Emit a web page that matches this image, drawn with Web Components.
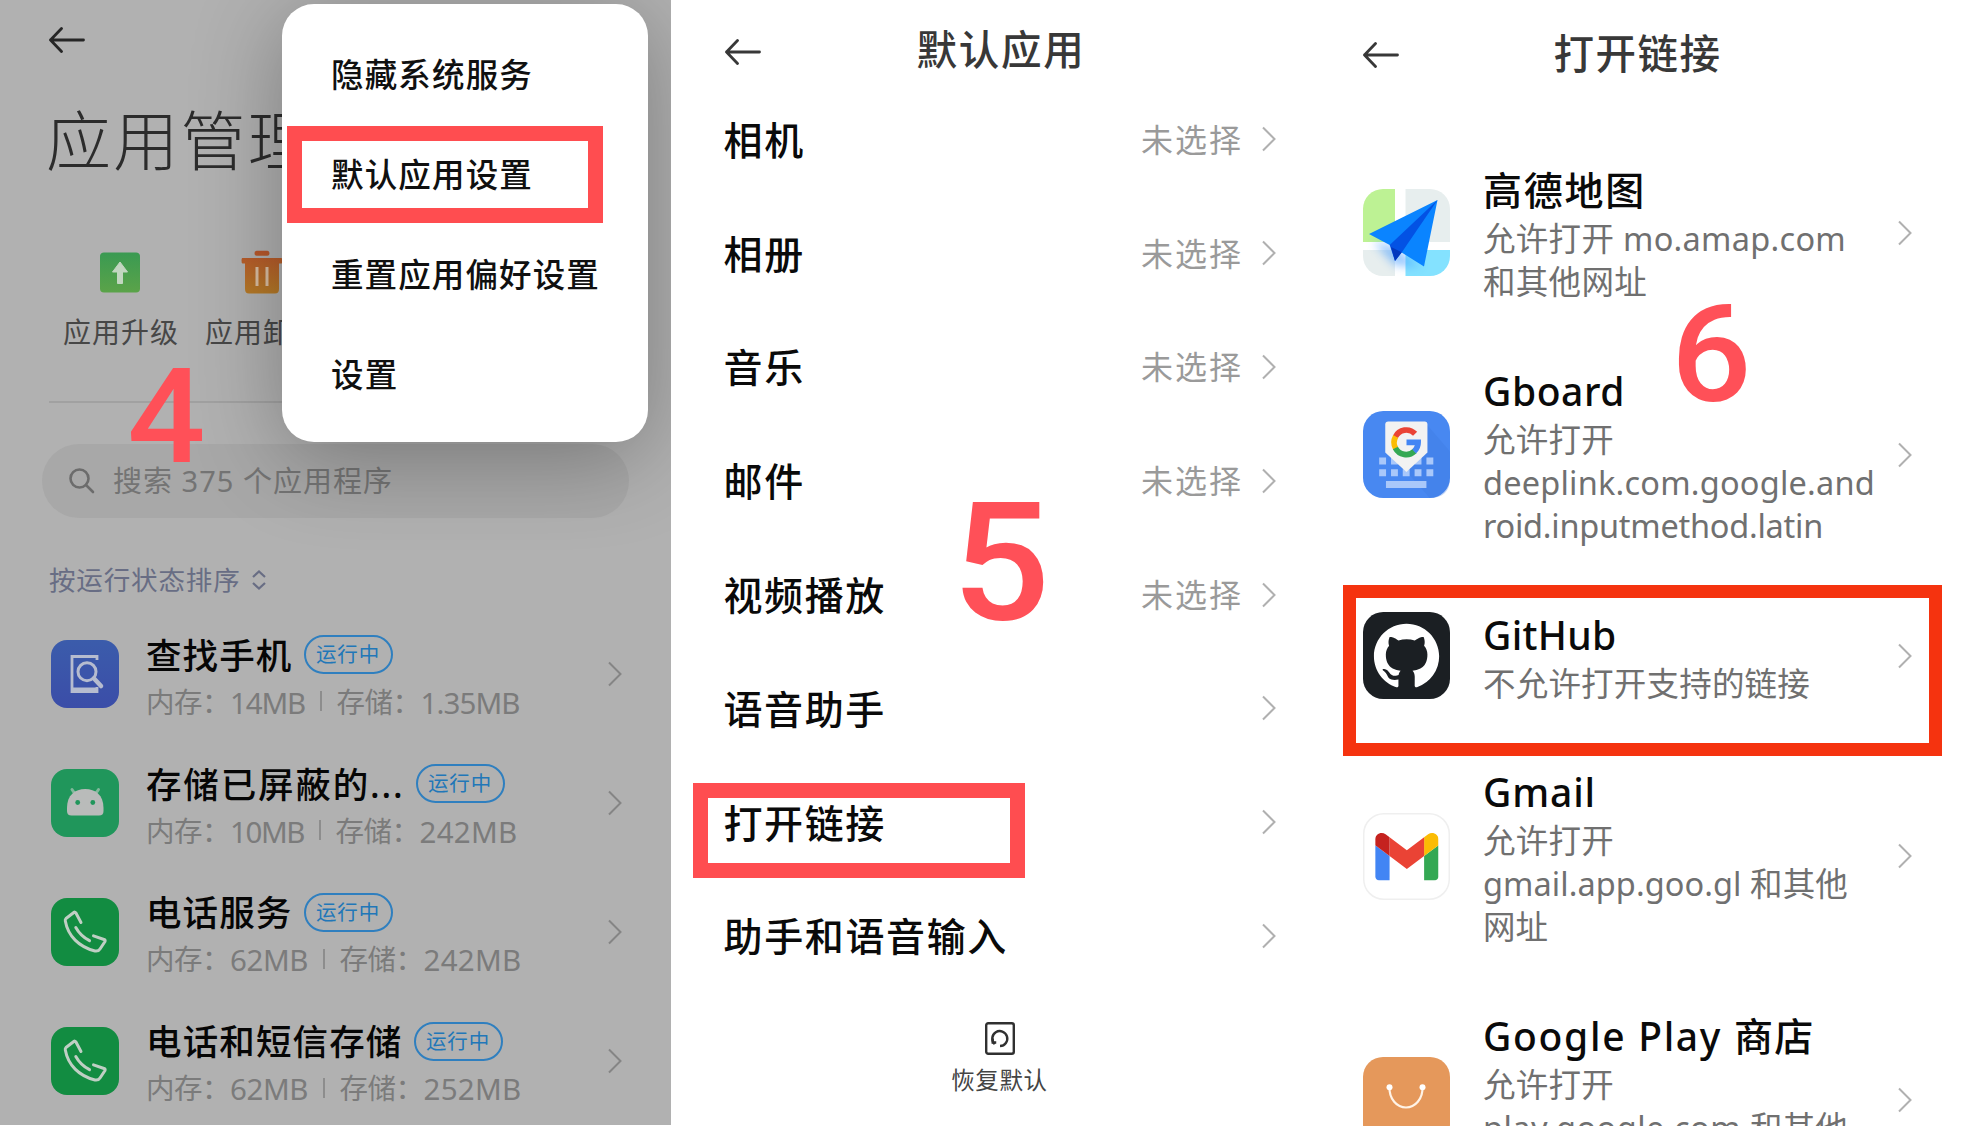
<!DOCTYPE html>
<html lang="zh-CN">
<head>
<meta charset="utf-8">
<title>默认应用设置</title>
<style>
body{margin:0;width:1967px;height:1126px;overflow:hidden;background:#fff;font-family:"Noto Sans","Noto Sans CJK SC",sans-serif;}
tutorial-page{height:1126px}
</style>
</head>
<body>
<tutorial-page></tutorial-page>
<script>
const define=(name,html,setup)=>{
  const tpl=document.createElement('template');
  tpl.innerHTML=html;
  customElements.define(name,class extends HTMLElement{
    constructor(){super();this.attachShadow({mode:'open'});}
    connectedCallback(){
      if(this.ready)return;this.ready=true;
      this.shadowRoot.append(tpl.content.cloneNode(true));
      if(setup)setup(this,this.shadowRoot);
    }
  });
};

/* Text run spread over a given advance width through letter-spacing. */
define('fit-text','<style>:host{display:inline-block;white-space:pre;flex:none}span{display:inline-block}</style><span><slot></slot></span>',(el,root)=>{
  const w=+el.getAttribute('w'),s=root.querySelector('span');
  const n=[...el.textContent].length;
  s.style.letterSpacing=((w-s.getBoundingClientRect().width)/n)+'px';
  el.style.width=w+'px';
});

define('back-arrow','<style>:host{display:block;flex:none}svg{display:block}</style><svg width="36" height="26" viewBox="0 0 36 26" fill="none" stroke="currentColor" stroke-width="2.8" stroke-linecap="round" stroke-linejoin="round"><path d="M34.5 13H1.5M12.5 1.5L1.5 13l11 11.5"/></svg>');
define('chevron-right','<style>:host{display:block;flex:none;color:#b0b0b0}svg{display:block}</style><svg width="14" height="26" viewBox="0 0 14 26" fill="none" stroke="currentColor" stroke-width="2"><path d="M1 1.5L12.5 13 1 24.5"/></svg>');

define('app-icon','<style>:host{display:block;flex:none}svg{display:block}</style>',(el,root)=>{
  const phone='<svg width="68" height="68" viewBox="0 0 68 68"><rect width="68" height="68" rx="16" fill="#128c41"/><g fill="none" stroke="#bfcfc4" stroke-width="3" stroke-linecap="round" stroke-linejoin="round"><path d="M30 24.5L24.8 14.8Q24 13.600 22.800 14.500L15 20.500Q14 21.500 14.300 23C17 38 28 49 44 53Q47.500 53.500 49 51L54 43.500Q54.500 42 53 41.500L42.500 37.800"/><path d="M24.800 29.500Q29.500 38 38.500 42.700"/></g></svg>';
  const icons={
    find:'<svg width="68" height="68" viewBox="0 0 68 68"><defs><linearGradient id="a" x1="0" y1="0" x2="0" y2="1"><stop stop-color="#3b5cab"/><stop offset="1" stop-color="#3b4da8"/></linearGradient></defs><rect width="68" height="68" rx="16" fill="url(#a)"/><path d="M46 20V16.500H21V51.500H46V47" fill="none" stroke="#b6bccf" stroke-width="2.800"/><path d="M21 47.500h25.500v5H21z" fill="#b6bccf"/><circle cx="36" cy="31.700" r="9" fill="#3b55aa" stroke="#b6bccf" stroke-width="3"/><path d="M43 38.500L50 46" stroke="#b6bccf" stroke-width="4.500" stroke-linecap="round"/></svg>',
    android:'<svg width="68" height="68" viewBox="0 0 68 68"><rect width="68" height="68" rx="16" fill="#20965b"/><path d="M21 20.500l4 6M47.500 20.500l-4 6" stroke="#82b89c" stroke-width="3" stroke-linecap="round"/><path d="M16 39C16 26 24 20 34.200 20S52.500 26 52.500 39v3q0 4.500-4.500 4.500H20.500Q16 46.500 16 42z" fill="#b9bbba"/><circle cx="26.700" cy="33.500" r="2.400" fill="#20965b"/><circle cx="41.800" cy="33.500" r="2.400" fill="#20965b"/></svg>',
    phone,
    amap:'<svg width="87" height="87" viewBox="0 0 87 87"><defs><clipPath id="c"><rect width="87" height="87" rx="20"/></clipPath><filter id="f" x="-50%" y="-50%" width="200%" height="200%"><feGaussianBlur stdDeviation="5"/></filter></defs><g clip-path="url(#c)"><path d="M0 0h87v87H0z" fill="#fff"/><path d="M0 0h32v53H0z" fill="#bdf294"/><path d="M42.500 0H87v53H42.500zM0 61h32v26H0z" fill="#e7eeee"/><path d="M42.500 61H87v26H42.500z" fill="#84e2ff"/><path d="M10 52l20 6 28 20-26-2z" fill="#459dff" opacity=".6" filter="url(#f)"/></g><path d="M74.500 11L6 45l20.700 11 12 7.500L61 77.500z" fill="#0a84ff"/><path d="M74.500 11L26.700 56 32 72l7-9z" fill="#0352e4"/><path d="M28 58l4 14 6.700-8.700z" fill="#0337bd"/></svg>',
    gboard:'<svg width="87" height="87" viewBox="0 0 86 86"><rect width="86" height="86" rx="20" fill="#4888f1"/><path d="M63.700 14L86 40V66q0 20-20 20L43 60z" fill="#3c78dd" opacity=".3"/><g fill="#a9c8fa"><path d="M16 46h6.800v6.800H16zM27.700 46h6.800v6.800h-6.800zM51 46h6.800v6.800H51zM62.700 46h6.800v6.800h-6.800zM16 57.700h6.800v6.800H16zM27.700 57.700h6.800v6.800h-6.800zM39.300 57.700h6.800v6.800h-6.800zM51 57.700h6.800v6.800H51zM62.700 57.700h6.800v6.800h-6.800zM22.700 69.300h40V76h-40z"/></g><path d="M25 10.300H61q2.700 0 2.700 3V41L42.900 60.300 22 41V13.300q0-3 3-3z" fill="#f2f2f2"/><g fill="none" stroke-width="5.600"><path d="M51.500 22.500A12 12 0 0 0 32 25.600" stroke="#ea4335"/><path d="M32.300 25.200a12 12 0 0 0 0 11.800" stroke="#fbbc05"/><path d="M32 36.500a12 12 0 0 0 19 3.200" stroke="#34a853"/><path d="M43 31h11.500a12 12 0 0 1-4 9" stroke="#4285f4"/></g></svg>',
    github:'<svg width="87" height="87" viewBox="0 0 86 86"><rect width="86" height="86" rx="20" fill="#1b1f23"/><path transform="translate(10.800 11.500) scale(4.030)" fill="#fff" d="M8 0C3.580 0 0 3.580 0 8c0 3.540 2.290 6.530 5.470 7.590.4.070.55-.17.55-.38 0-.19-.01-.82-.01-1.490-2.010.37-2.530-.49-2.690-.94-.09-.23-.48-.94-.82-1.130-.28-.15-.68-.52-.01-.53.63-.01 1.080.58 1.230.82.72 1.210 1.870.87 2.330.66.07-.52.28-.87.51-1.070-1.780-.2-3.640-.89-3.640-3.950 0-.87.31-1.590.82-2.150-.08-.2-.36-1.020.08-2.120 0 0 .67-.21 2.200.82.64-.18 1.320-.27 2-.27s1.360.09 2 .27c1.530-1.040 2.200-.82 2.200-.82.44 1.100.16 1.920.08 2.120.51.56.82 1.270.82 2.150 0 3.070-1.870 3.750-3.650 3.950.29.25.54.73.54 1.480 0 1.070-.01 1.930-.01 2.200 0 .21.15.46.55.38A8.013 8.013 0 0 0 16 8c0-4.420-3.580-8-8-8z"/></svg>',
    gmail:'<svg width="87" height="87" viewBox="0 0 87 87"><rect x=".75" y=".75" width="85.500" height="85.500" rx="20" fill="#fff" stroke="#efefef" stroke-width="1.500"/><svg x="12.200" y="20" width="63.300" height="47.500" viewBox="52 42 88 66"><path fill="#4285f4" d="M58 108h14V74L52 59v43c0 3.320 2.690 6 6 6"/><path fill="#34a853" d="M120 108h14c3.320 0 6-2.690 6-6V59l-20 15"/><path fill="#fbbc04" d="M120 48v26l20-15v-8c0-7.420-8.470-11.650-14.400-7.200"/><path fill="#ea4335" d="M72 74V48l24 18 24-18v26L96 92"/><path fill="#c5221f" d="M52 51v8l20 15V48l-5.600-4.200c-5.940-4.450-14.400-.22-14.400 7.200"/></svg></svg>',
    play:'<svg width="87" height="87" viewBox="0 0 87 87"><rect width="87" height="87" rx="20" fill="#e5985b"/><path d="M26.500 30C26 42 34 50.500 43 50.500S60 42 59.500 30" fill="none" stroke="#fff3e6" stroke-width="2.200"/><circle cx="26.500" cy="30.300" r="3" fill="#fff"/><circle cx="59.500" cy="30.300" r="3" fill="#fff"/></svg>'
  };
  root.innerHTML+=icons[el.getAttribute('name')];
});

define('status-badge','<style>:host{display:flex;box-sizing:border-box;width:89px;height:39px;border:2px solid #2f7fbf;border-radius:20px;align-items:center;justify-content:center;color:#2177b8;font-size:20.500px;line-height:35px;flex:none}</style><fit-text w="64">运行中</fit-text>');

const appRow=r=>`<app-line><app-icon slot="icon" name="${r.i}"></app-icon><fit-text slot="name" w="${r.nw}">${r.n}</fit-text><fit-text slot="mem" w="${r.mw}">${r.m}</fit-text><fit-text slot="store" w="${r.sw}">${r.s}</fit-text></app-line>`;
define('app-line',`<style>
:host{display:flex;align-items:center;height:128.800px;padding:0 49px 0 51px}
.t{flex:1;padding:8px 0 0 27px}
.a{display:flex;align-items:center;height:48px;font-size:35.500px;line-height:46px;font-weight:500;color:#060606}
status-badge{font-weight:400;margin-left:11px}
.b{display:flex;align-items:center;height:47px;font-size:28.500px;line-height:47px;color:#7b7b7b;font-weight:400}
.b ::slotted(fit-text){font-size:29.500px}
i{width:1.500px;height:20px;background:#8d8d8d;margin:0 15px 2px 15px}
chevron-right{color:#858585}
</style><slot name="icon"></slot><div class="t"><div class="a"><slot name="name"></slot><status-badge></status-badge></div><div class="b"><fit-text w="84">内存：</fit-text><slot name="mem"></slot><i></i><fit-text w="84">存储：</fit-text><slot name="store"></slot></div></div><chevron-right></chevron-right>`);

define('popup-menu',`<style>
:host{display:flex;flex-direction:column;box-sizing:border-box;position:absolute;left:282px;top:4px;width:366px;height:438px;border-radius:32px;background:#fff;padding:20.500px 0 0 49px;box-shadow:0 14px 90px rgba(0,0,0,.3);font-size:32.500px;font-weight:500;color:#101010}
div{height:100.300px;line-height:99.300px}
</style><div><fit-text w="202">隐藏系统服务</fit-text></div><div><fit-text w="202">默认应用设置</fit-text></div><div><fit-text w="269">重置应用偏好设置</fit-text></div><div><fit-text w="67.500">设置</fit-text></div>`);

define('app-manager',`<style>
:host{display:block;box-sizing:border-box;width:671px;height:1125px;background:#b1b1b1;overflow:hidden;position:relative;flex:none;color:#2c2c2c}
header{height:80px;display:flex;align-items:center;padding-left:49px;color:#262626}
h1{margin:0;height:120px;line-height:120px;padding-left:46px;font-size:65px;font-weight:300}
.acts{display:flex;box-sizing:border-box;height:203px;margin:0 49px;padding-top:50px;border-bottom:2px solid #a1a1a1}
.act{width:142px;flex:none;display:flex;flex-direction:column;align-items:center;gap:18px;font-size:28px;line-height:40px;color:#474747;font-weight:400}
.act svg{display:block}
.act fit-text{margin-left:2px}
.search{display:flex;align-items:center;height:74px;box-sizing:border-box;border-radius:37px;margin:41px 42px 0 42px;padding:0 27px;background:#a8a8a8;color:#747474;font-size:29px;line-height:74px;gap:18px}
.sort{display:flex;align-items:center;height:40px;margin:42px 0 0 49px;color:#686d84;font-size:26.500px;gap:11px;line-height:40px}
.list{margin-top:10px}
</style>
<header><back-arrow></back-arrow></header>
<h1><fit-text w="269">应用管理</fit-text></h1>
<div class="acts">
<div class="act"><svg width="40" height="44" viewBox="0 0 40 44"><defs><linearGradient id="g" x1="0" y1="0" x2="0" y2="1"><stop stop-color="#3a9a52"/><stop offset="1" stop-color="#5ba349"/></linearGradient></defs><rect y="2.500" width="40" height="40" rx="4" fill="url(#g)"/><path d="M20 12l7.500 10h-5v11.500h-5V22h-5z" fill="#c2d6c0" stroke="#c2d6c0" stroke-linejoin="round"/></svg><fit-text w="116">应用升级</fit-text></div>
<div class="act"><svg width="42" height="44" viewBox="0 0 42 44"><defs><linearGradient id="o" x1="0" y1="0" x2="0" y2="1"><stop stop-color="#b8562b"/><stop offset="1" stop-color="#b67b28"/></linearGradient></defs><path d="M15.500.800h11q2 0 2 2.500t-2 2.500h-11q-2 0-2-2.500t2-2.500zM1.500 8H40.500q1 0 1 2.500t-1 3H38V39q0 4.500-4 4.500H8Q4 43.500 4 39V13.500H1.500q-1 0-1-3T1.500 8z" fill="url(#o)"/><path d="M14.500 17h3v19h-3zM24.500 17h3v19h-3z" fill="#d9bea2"/></svg><fit-text w="116">应用卸载</fit-text></div>
</div>
<div class="search"><svg width="26" height="26" viewBox="0 0 26 26" fill="none" stroke="#6c6c6c" stroke-width="2.600" stroke-linecap="round"><circle cx="10.500" cy="10.500" r="9"/><path d="M17 17l7 7"/></svg><fit-text w="280">搜索 375 个应用程序</fit-text></div>
<div class="sort"><fit-text w="191.500">按运行状态排序</fit-text><svg width="14" height="20" viewBox="0 0 14 20" fill="none" stroke="currentColor" stroke-width="2.200"><path d="M1 7l6-5.500L13 7M1 13l6 5.500L13 13"/></svg></div>
<div class="list">${[
{i:'find',n:'查找手机',nw:146.5,m:'14MB',mw:75,s:'1.35MB',sw:99},
{i:'android',n:'存储已屏蔽的...',nw:258.5,m:'10MB',mw:74,s:'242MB',sw:98},
{i:'phone',n:'电话服务',nw:146.5,m:'62MB',mw:78,s:'242MB',sw:98},
{i:'phone',n:'电话和短信存储',nw:256.5,m:'62MB',mw:78,s:'252MB',sw:98}].map(appRow).join('')}</div>
<popup-menu></popup-menu>`);

const defRow=(t,w,v)=>`<setting-row><fit-text w="${w}">${t}</fit-text>${v?'<fit-text slot="value" w="102">未选择</fit-text>':''}</setting-row>`;
define('setting-row',`<style>
:host{display:flex;align-items:center;height:113.800px;padding:0 55px 0 52.500px;font-size:39px;font-weight:500;color:#0a0a0a}
.l{flex:1;margin-bottom:5px}
.v{font-size:32px;font-weight:400;color:#9a9a9a;margin:0 19px 5px 0}
chevron-right{margin-bottom:2px}
</style><div class="l"><slot></slot></div><div class="v"><slot name="value"></slot></div><chevron-right></chevron-right>`);

define('default-apps',`<style>
:host{display:block;width:660px;height:1126px;flex:none;color:#383838}
header{display:grid;grid-template-columns:140px 1fr 140px;height:84px;align-items:center;margin-bottom:-.500px}
header back-arrow{margin:19px 0 0 54px}
h2{margin:15px 0 0;font-weight:450;font-size:40.500px;text-align:center;line-height:60px}
.foot{display:flex;flex-direction:column;align-items:center;margin:28px 3px 0 0;gap:8px;font-size:23.500px;line-height:34px;color:#444}
.foot svg{display:block}
</style>
<header><back-arrow></back-arrow><h2><fit-text w="169">默认应用</fit-text></h2></header>
${defRow('相机',81.5,1)}${defRow('相册',81.5,1)}${defRow('音乐',81.5,1)}${defRow('邮件',81.5,1)}${defRow('视频播放',162.5,1)}${defRow('语音助手',162.5)}${defRow('打开链接',162.5)}${defRow('助手和语音输入',284.5)}
<div class="foot"><svg width="30" height="33" viewBox="0 0 30 33" fill="none" stroke="#303030" stroke-width="2.400"><rect x="1.200" y="1.200" width="27.600" height="30.600" rx="2"/><path d="M10.500 22.800A7.500 7.500 0 1 1 16 24" transform="rotate(8 15 17)"/><path d="M8 16.500l-.500 4 3.500.500" transform="rotate(-8 8 19)"/></svg><fit-text w="96.500">恢复默认</fit-text></div>`);

define('link-item',`<style>
:host{display:flex;align-items:center;margin-bottom:60.800px}
.t{flex:1;padding-left:33px;font-size:32.500px;line-height:43px;color:#707070}
.h{height:54px;line-height:53px;font-size:39px;font-weight:500;color:#0a0a0a;white-space:nowrap}
chevron-right{margin-bottom:1px}
::slotted(app-icon){margin-bottom:1px}
</style><slot name="icon"></slot><div class="t"><div class="h"><slot name="title"></slot></div><slot></slot></div><chevron-right></chevron-right>`);
define('text-line','<style>:host{display:flex;height:43px;gap:0;white-space:pre}</style><slot></slot>');
define('title-line','<style>:host{display:flex}</style><slot></slot>');

const F=(w,t)=>`<fit-text w="${w}">${t}</fit-text>`;
const link=(icon,title,lines)=>`<link-item><app-icon slot="icon" name="${icon}"></app-icon><title-line slot="title">${title}</title-line>${lines.map(l=>`<text-line>${l}</text-line>`).join('')}</link-item>`;
define('open-links',`<style>
:host{display:block;width:636px;height:1126px;flex:none;overflow:hidden;color:#383838}
header{display:grid;grid-template-columns:140px 1fr 140px;height:103px;margin-bottom:60px;box-sizing:border-box;padding-top:7px;align-items:center}
back-arrow{margin:0 0 0 32px}
h2{margin:0 0 2px;font-weight:450;font-size:40.500px;line-height:60px;text-align:center;padding-right:23px}
.list{padding:0 55px 0 32px}
</style>
<header><back-arrow></back-arrow><h2>${F(168,'打开链接')}</h2></header>
<div class="list">
${link('amap',F(163,'高德地图'),[F(140,'允许打开 ')+F(223,'mo.amap.com'),F(164,'和其他网址')])}
${link('gboard',F(142,'Gboard'),[F(131,'允许打开'),F(392,'deeplink.com.google.and'),F(340,'roid.inputmethod.latin')])}
${link('github',F(133.5,'GitHub'),[F(327,'不允许打开支持的链接')])}
${link('gmail',F(113,'Gmail'),[F(131,'允许打开'),F(267,'gmail.app.goo.gl ')+F(98,'和其他'),F(65,'网址')])}
${link('play',F(251,'Google Play ')+F(80.5,'商店'),[F(131,'允许打开'),F(267,'play.google.com ')+F(98,'和其他'),F(65,'网址')])}
</div>`);

/* Red annotations drawn over the three screens. */
define('mark-box','<style>:host{display:block;position:absolute;box-sizing:border-box;border:15px solid #ff4d50}</style>');
define('mark-digit','<style>:host{display:block;position:absolute;color:#ff5058;font-family:Roboto,sans-serif;font-weight:500;line-height:1;white-space:nowrap;transform:scaleX(1.05);transform-origin:50% 50%}</style><slot></slot>');

define('tutorial-page',`<style>
:host{display:flex;position:relative;width:1967px;overflow:hidden}
</style>
<app-manager></app-manager><default-apps></default-apps><open-links></open-links>
<mark-box style="left:287px;top:125.500px;width:316px;height:97.500px"></mark-box>
<mark-box style="left:693px;top:783px;width:332px;height:95px"></mark-box>
<mark-box style="left:1343px;top:585px;width:599px;height:170.500px;border:13.500px solid #f5330f"></mark-box>
<mark-digit style="left:129px;top:352px;font-size:131px">4</mark-digit>
<mark-digit style="left:954px;top:479.500px;font-size:165px">5</mark-digit>
<mark-digit style="left:1673px;top:288px;font-size:135px">6</mark-digit>`);
</script>
</body>
</html>
